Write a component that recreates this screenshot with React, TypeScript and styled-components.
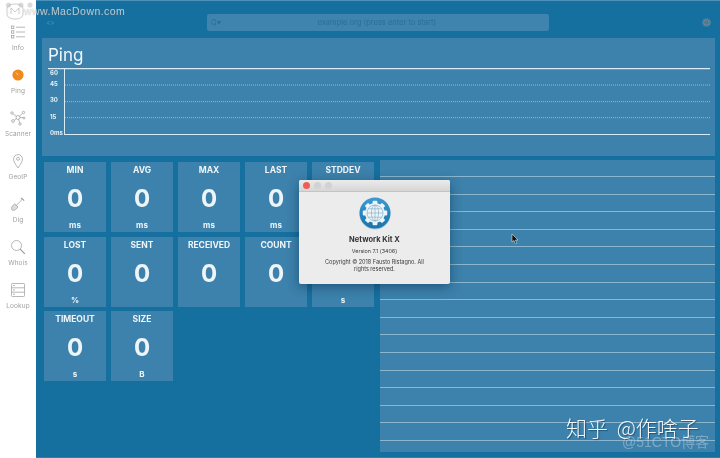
import React from "react";
import styled, { createGlobalStyle } from "styled-components";

const Global = createGlobalStyle`
  *, *::before, *::after { box-sizing: border-box; }
  html, body { margin: 0; padding: 0; width: 720px; height: 458px; overflow: hidden; background: #fff; }
  body { font-family: Inter, "Liberation Sans", sans-serif; }
`;

/* ── Shell ───────────────────────────────── */
/* the reference is a scaled-down capture, hence the slight softening */
const Shell = styled.div`
  position: relative;
  display: flex;
  width: 720px;
  height: 458px;
  overflow: hidden;
  background: #fff;
  filter: blur(0.35px);
`;

const Sidebar = styled.nav`
  flex: 0 0 36px;
  display: flex;
  flex-direction: column;
  align-items: center;
  padding-top: 24px;
  gap: 15px;
  background: #fff;
`;

const NavItem = styled.div`
  width: 36px;
  height: 28px;
  display: flex;
  flex-direction: column;
  align-items: center;
  justify-content: space-between;
  color: #a0a0a0;
  font-size: 6.5px;
  line-height: 8px;
  letter-spacing: 0.1px;
  svg { display: block; width: 16px; height: 16px; }
`;

const Main = styled.main`
  flex: 1;
  min-width: 0;
  display: flex;
  flex-direction: column;
  background: #16709f;
  border-top: 1px solid #4b91b9;
  border-bottom: 1px solid #2f7fab;
`;

/* ── Top bar ─────────────────────────────── */
const TopBar = styled.header`
  flex: 0 0 37px;
  display: flex;
  align-items: center;
  padding: 6px 9px 0 10px;
`;

const NavArrows = styled.span`
  flex: 0 0 161px;
  color: #5b93b3;
  font-size: 7px;
  letter-spacing: -0.5px;
`;

const Search = styled.div`
  flex: 0 0 342px;
  height: 17px;
  display: flex;
  align-items: center;
  border-radius: 2px;
  background: #3f84ae;
  color: #296e99;
  font-size: 7.5px;
  padding: 0 4px;
`;

const SearchText = styled.span`
  flex: 1;
  text-align: center;
  padding-right: 12px;
`;

const Gear = styled.span`
  margin-left: auto;
  display: flex;
  svg { width: 9px; height: 9px; display: block; }
`;

/* ── Chart panel ─────────────────────────── */
const ChartPanel = styled.section`
  flex: 0 0 118px;
  margin: 0 5px 0 6px;
  background: #3c82ac;
  display: flex;
  flex-direction: column;
  padding: 8px 0 0 6px;
`;

const PanelTitle = styled.h1`
  margin: 0;
  color: #f2f7fa;
  font-size: 17px;
  line-height: 19px;
  font-weight: 400;
`;

const ChartSvg = styled.svg`
  display: block;
  margin-top: 3px;
  width: 667px;
  height: 72px;
  font-family: Inter, "Liberation Sans", sans-serif;
  font-size: 6px;
  font-weight: 700;
  fill: #e8f2f7;
`;

/* ── Stats + list ────────────────────────── */
const Lower = styled.div`
  flex: 1;
  min-height: 0;
  display: flex;
  padding: 4px 5px 5px 8px;
  gap: 6px;
`;

const StatGrid = styled.div`
  flex: 0 0 330px;
  display: grid;
  grid-template-columns: repeat(5, 62px);
  grid-auto-rows: 70px;
  gap: 4.7px 5px;
  padding-top: 2px;
  align-content: start;
`;

const Card = styled.div`
  background: #3c82ac;
  display: flex;
  flex-direction: column;
  align-items: center;
  color: #eef5f8;
  padding: 3px 0 2px;
`;

const CardTitle = styled.div`
  font-size: 8.5px;
  line-height: 10px;
  font-weight: 700;
`;

const CardValue = styled.div`
  font-size: 24px;
  line-height: 28px;
  font-weight: 700;
  margin-top: 10px;
`;

const CardUnit = styled.div`
  margin-top: auto;
  font-size: 8px;
  line-height: 10px;
  font-weight: 700;
`;

const ListPanel = styled.div`
  flex: 1;
  min-height: 0;
  overflow: hidden;
  background: #3c82ac;
  padding-top: 16px;
  display: flex;
  flex-direction: column;
`;

const ListRow = styled.div`
  flex: 0 0 17.6px;
  border-top: 1px solid #8ab6d0;
`;

/* ── About window ────────────────────────── */
const AboutWindow = styled.div`
  position: absolute;
  left: 299px;
  top: 180px;
  width: 151px;
  height: 104px;
  border-radius: 2px;
  background: #ececec;
  box-shadow: 0 3px 12px rgba(0, 30, 60, 0.45);
  display: flex;
  flex-direction: column;
  align-items: center;
  color: #3a3a3a;
  overflow: hidden;
`;

const TitleBar = styled.div`
  align-self: stretch;
  flex: 0 0 12px;
  display: flex;
  align-items: center;
  gap: 4px;
  padding-left: 4px;
  background: linear-gradient(#ebebeb, #d6d6d6);
  border-bottom: 1px solid #c4c4c4;
`;

const Light = styled.span<{ $color: string }>`
  width: 7px;
  height: 7px;
  border-radius: 50%;
  background: ${({ $color }) => $color};
`;

const AppIcon = styled.svg`
  display: block;
  flex: 0 0 33px;
  width: 32px;
  height: 33px;
  margin-top: 5px;
`;

const AboutName = styled.div`
  margin-top: 5px;
  font-size: 7.5px;
  line-height: 10px;
  font-weight: 700;
  color: #333;
`;

const AboutVersion = styled.div`
  margin-top: 2px;
  font-size: 5.4px;
  line-height: 8px;
`;

const AboutCopy = styled.div`
  margin-top: 3.5px;
  width: 110px;
  text-align: center;
  font-size: 5.5px;
  line-height: 7px;
`;

/* ── Overlays ────────────────────────────── */
const Cursor = styled.svg`
  position: absolute;
  left: 511px;
  top: 234px;
  width: 7px;
  height: 10px;
`;

const MacDownMark = styled.div`
  position: absolute;
  left: 4px;
  top: 1px;
  display: flex;
  align-items: center;
  color: rgba(255, 255, 255, 0.62);
  text-shadow: 0 0 1px rgba(110, 110, 110, 0.55);
  font-family: "Liberation Sans", sans-serif;
  font-size: 10.5px;
  letter-spacing: 0.45px;
  svg { width: 30px; height: 20px; margin-right: -10px; }
`;

const ZhihuMark = styled.div`
  position: absolute;
  left: 566px;
  top: 414px;
  color: #f4f8fb;
  font-family: "Noto Sans CJK SC", sans-serif;
  font-size: 21px;
  font-weight: 300;
  line-height: 26px;
  word-spacing: 4px;
  white-space: pre;
  text-shadow: 1px 1px 1px rgba(0, 40, 70, 0.5);
`;

const CtoMark = styled.div`
  position: absolute;
  left: 622px;
  top: 435px;
  color: rgba(210, 225, 235, 0.42);
  font-family: "Liberation Sans", "Noto Sans CJK SC", sans-serif;
  font-size: 14px;
  line-height: 14px;
`;

/* ── Icons ───────────────────────────────── */
const stroke = { fill: "none", stroke: "#9a9a9a", strokeWidth: 0.7 };

const InfoIcon = () => (
  <svg viewBox="0 0 16 16" {...stroke}>
    <rect x="1.5" y="2" width="2.4" height="2.4" />
    <rect x="1.5" y="6.8" width="2.4" height="2.4" />
    <rect x="1.5" y="11.6" width="2.4" height="2.4" />
    <path d="M6 3.2h9M6 8h9M6 12.8h9" />
  </svg>
);

const PingIcon = () => (
  <svg viewBox="0 0 16 16">
    <circle cx="8" cy="8" r="5.6" fill="#ee8a1f" />
    <path d="M6 5.6l2.2 2.6" stroke="#fbe3c4" strokeWidth="0.8" fill="none" />
  </svg>
);

const ScannerIcon = () => (
  <svg viewBox="0 0 16 16" {...stroke}>
    <circle cx="8" cy="7.5" r="2" />
    <circle cx="2" cy="3" r="1.2" />
    <circle cx="13.5" cy="2.5" r="1.2" />
    <circle cx="3" cy="11" r="1.4" />
    <circle cx="14" cy="8" r="1" />
    <circle cx="10" cy="14" r="1.2" />
    <path d="M3 3.8l3.4 2.6M12.6 3.3l-3.2 3M4.3 10.3l2-1.6M10 7.6h3M8.6 9.4l1 3.4" />
  </svg>
);

const PinIcon = () => (
  <svg viewBox="0 0 16 16" {...stroke}>
    <path d="M8 15c-2.6-4-4.4-6.2-4.4-9a4.4 4.4 0 0 1 8.8 0c0 2.8-1.8 5-4.4 9z" />
    <circle cx="8" cy="5.8" r="1.5" />
  </svg>
);

const DigIcon = () => (
  <svg viewBox="0 0 16 16" {...stroke}>
    <path d="M2.2 10.2l2.6-2.4 3.2 3.2-2.4 2.6c-1.4 1-3 .9-3.6.4-.5-.7-.8-2.4.2-3.8z" fill="#dcdcdc" />
    <path d="M6.4 9.4l6.2-6.6" />
    <path d="M11 1.8l3.2 2.8" strokeWidth="1.1" />
  </svg>
);

const WhoisIcon = () => (
  <svg viewBox="0 0 16 16" {...stroke}>
    <circle cx="6.5" cy="6.5" r="5" />
    <path d="M10.2 10.2l4.6 4.6" strokeWidth="1.2" />
  </svg>
);

const LookupIcon = () => (
  <svg viewBox="0 0 16 16" {...stroke}>
    <rect x="1.5" y="1.5" width="13" height="13" rx="0.8" />
    <path d="M1.5 5.8h13M1.5 10.2h13" />
    <path d="M3 3.6h2M3 8h2M3 12.3h2" />
  </svg>
);

const GearIcon = ({ color }: { color: string }) => (
  <svg viewBox="0 0 12 12">
    <circle cx="6" cy="6" r="3.6" fill="none" stroke={color} strokeWidth="1.6" />
    <circle cx="6" cy="6" r="5" fill="none" stroke={color} strokeWidth="1.6" strokeDasharray="1.5 1.1" />
    <circle cx="6" cy="6" r="2.2" fill={color} opacity="0.6" />
  </svg>
);

const GEAR_TEETH = [0, 45, 90, 135, 180, 225, 270, 315];

const NetworkKitIcon = () => (
  <AppIcon viewBox="0 0 32 33">
    <defs>
      <linearGradient id="disc" x1="0" y1="0" x2="0" y2="1">
        <stop offset="0" stopColor="#3a9bd2" />
        <stop offset="1" stopColor="#1a74ab" />
      </linearGradient>
    </defs>
    <circle cx="16" cy="17" r="15.5" fill="#a9cbdf" />
    <circle cx="16" cy="16" r="15.5" fill="url(#disc)" />
    {GEAR_TEETH.map((a) => (
      <rect key={a} x="13.6" y="3.8" width="4.8" height="4.6" rx="1" fill="#eef4f7" transform={`rotate(${a} 16 16)`} />
    ))}
    <circle cx="16" cy="16" r="10" fill="#eef4f7" />
    <g fill="none" stroke="#78a8c6" strokeWidth="0.6">
      <circle cx="16" cy="16" r="8" />
      <ellipse cx="16" cy="16" rx="3.6" ry="8" />
      <path d="M16 8v16M8 16h16M9.2 11.8h13.6M9.2 20.2h13.6" />
    </g>
  </AppIcon>
);

const BearLogo = () => (
  <svg viewBox="0 0 30 20" fill="none" stroke="rgba(255,255,255,0.6)" strokeWidth="1">
    <circle cx="4.5" cy="4" r="2.6" fill="rgba(190,190,190,0.55)" stroke="none" />
    <circle cx="17" cy="4" r="2.6" fill="rgba(190,190,190,0.55)" stroke="none" />
    <circle cx="26" cy="4" r="2.6" fill="rgba(190,190,190,0.55)" stroke="none" />
    <path d="M3 8c0-3 3-5 8-5s8 2 8 5v5c0 3-3 5-8 5s-8-2-8-5z" stroke="rgba(170,170,170,0.6)" />
    <path d="M7 13V7l4 4 4-4v6" stroke="rgba(170,170,170,0.6)" />
  </svg>
);

/* ── Data ────────────────────────────────── */
const NAV = [
  { label: "Info", icon: <InfoIcon /> },
  { label: "Ping", icon: <PingIcon /> },
  { label: "Scanner", icon: <ScannerIcon /> },
  { label: "GeoIP", icon: <PinIcon /> },
  { label: "Dig", icon: <DigIcon /> },
  { label: "Whois", icon: <WhoisIcon /> },
  { label: "Lookup", icon: <LookupIcon /> },
];

const STATS = [
  { title: "MIN", unit: "ms" },
  { title: "AVG", unit: "ms" },
  { title: "MAX", unit: "ms" },
  { title: "LAST", unit: "ms" },
  { title: "STDDEV", unit: "ms" },
  { title: "LOST", unit: "%" },
  { title: "SENT" },
  { title: "RECEIVED" },
  { title: "COUNT" },
  { title: "", unit: "s" },
  { title: "TIMEOUT", unit: "s" },
  { title: "SIZE", unit: "B" },
];

const GRID_LINES = [17, 33.7, 49.7];

const LABELS = [
  { text: "60", y: 6.5 },
  { text: "45", y: 17.5 },
  { text: "30", y: 34 },
  { text: "15", y: 50.5 },
  { text: "0ms", y: 66.5 },
];

export default function App() {
  return (
    <Shell>
      <Global />
      <Sidebar>
        {NAV.map((item) => (
          <NavItem key={item.label}>
            {item.icon}
            <span>{item.label}</span>
          </NavItem>
        ))}
      </Sidebar>

      <Main>
        <TopBar>
          <NavArrows>&lt;&gt;</NavArrows>
          <Search>
            <span>Q▾</span>
            <SearchText>example.org (press enter to start)</SearchText>
          </Search>
          <Gear>
            <GearIcon color="#77858e" />
          </Gear>
        </TopBar>

        <ChartPanel>
          <PanelTitle>Ping</PanelTitle>
          <ChartSvg viewBox="0 0 667 72">
            {LABELS.map((l) => (
              <text key={l.text} x="2" y={l.y}>
                {l.text}
              </text>
            ))}
            <path d="M0 .5H662" stroke="#d8ecf5" strokeWidth="1.4" />
            <path d="M16 66.5H662" stroke="#d8ecf5" strokeWidth="1" />
            <path d="M16.5 0V66" stroke="#d8ecf5" strokeWidth="1" />
            {GRID_LINES.map((y) => (
              <path key={y} d={`M17 ${y}H662`} stroke="#a9cde0" strokeWidth="0.8" strokeDasharray="1 1" />
            ))}
          </ChartSvg>
        </ChartPanel>

        <Lower>
          <StatGrid>
            {STATS.map((s) => (
              <Card key={s.title || "hidden"}>
                <CardTitle>{s.title}</CardTitle>
                <CardValue>{s.title ? "0" : ""}</CardValue>
                {s.unit && <CardUnit>{s.unit}</CardUnit>}
              </Card>
            ))}
          </StatGrid>
          <ListPanel>
            {Array.from({ length: 16 }, (_, i) => (
              <ListRow key={i} />
            ))}
          </ListPanel>
        </Lower>
      </Main>

      <AboutWindow>
        <TitleBar>
          <Light $color="#ec5f56" />
          <Light $color="#d2d2d2" />
          <Light $color="#d2d2d2" />
        </TitleBar>
        <NetworkKitIcon />
        <AboutName>Network Kit X</AboutName>
        <AboutVersion>Version 7.1 (3406)</AboutVersion>
        <AboutCopy>Copyright © 2018 Fausto Ristagno. All rights reserved.</AboutCopy>
      </AboutWindow>

      <Cursor viewBox="0 0 7 10">
        <path d="M1 0v8l2-1.6L4.4 10l1.4-.6L4.4 6H7z" fill="#111" stroke="#fff" strokeWidth="0.5" />
      </Cursor>

      <MacDownMark>
        <BearLogo />
        www.MacDown.com
      </MacDownMark>
      <ZhihuMark>知乎 @作啥子</ZhihuMark>
      <CtoMark>@51CTO博客</CtoMark>
    </Shell>
  );
}
